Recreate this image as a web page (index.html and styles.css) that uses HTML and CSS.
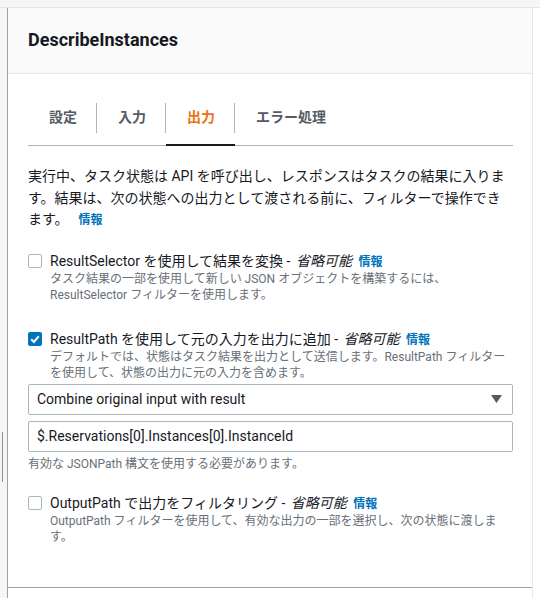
FILE: index.html
```html
<!DOCTYPE html>
<html lang="ja">
<head>
<meta charset="utf-8">
<title>DescribeInstances</title>
<link rel="stylesheet" href="styles.css">
</head>
<body>
<div class="topbar"></div>
<div class="main">
  <div class="gutter"><div class="handle"></div></div>
  <div class="panel">
    <div class="panel-header"><h2 class="title">DescribeInstances</h2></div>
    <div class="panel-body">
      <div class="tabs">
        <div class="tab">設定</div>
        <div class="tab">入力</div>
        <div class="tab active">出力</div>
        <div class="tab">エラー処理</div>
      </div>
      <p class="intro">実行中、タスク状態は API を呼び出し、レスポンスはタスクの結果に入ります。結果は、次の状態への出力として渡される前に、フィルターで操作できます。<a class="info info-gap">情報</a></p>

      <div class="option option-first">
        <span class="checkbox"></span>
        <div class="option-text">
          <div class="option-label">ResultSelector を使用して結果を変換 - <i>省略可能</i> <a class="info">情報</a></div>
          <div class="option-desc">タスク結果の一部を使用して新しい JSON オブジェクトを構築するには、 ResultSelector フィルターを使用します。</div>
        </div>
      </div>

      <div class="option option-second">
        <span class="checkbox checked"><svg viewBox="0 0 14 14" width="14" height="14"><rect x="0" y="0" width="14" height="14" rx="2" fill="#0073bb"/><path d="M3.2 7.2 L6 10 L10.8 4.2" fill="none" stroke="#fff" stroke-width="2"/></svg></span>
        <div class="option-text">
          <div class="option-label">ResultPath を使用して元の入力を出力に追加 - <i>省略可能</i> <a class="info">情報</a></div>
          <div class="option-desc">デフォルトでは、状態はタスク結果を出力として送信します。ResultPath フィルターを使用して、状態の出力に元の入力を含めます。</div>
        </div>
      </div>

      <div class="select">
        <span class="select-value">Combine original input with result</span>
        <svg class="caret" viewBox="0 0 11 8" width="11" height="8"><polygon points="0,0 11,0 5.5,8" fill="#545b64"/></svg>
      </div>
      <div class="input">$.Reservations[0].Instances[0].InstanceId</div>
      <div class="hint">有効な JSONPath 構文を使用する必要があります。</div>

      <div class="option option-third">
        <span class="checkbox"></span>
        <div class="option-text">
          <div class="option-label">OutputPath で出力をフィルタリング - <i>省略可能</i> <a class="info">情報</a></div>
          <div class="option-desc">OutputPath フィルターを使用して、有効な出力の一部を選択し、次の状態に渡します。</div>
        </div>
      </div>
    </div>
    <div class="panel-footer"></div>
  </div>
</div>
</body>
</html>
```

FILE: styles.css
```css
* { box-sizing: border-box; }

html, body {
  margin: 0;
  padding: 0;
  background: #ffffff;
  font-family: Roboto, "Noto Sans CJK JP", sans-serif;
  color: #16191f;
}

.topbar {
  height: 8px;
  background: #f6f6f6;
  border-bottom: 1px solid #e2e7e7;
}

.main {
  display: flex;
  min-height: 590px;
}

.gutter {
  width: 7px;
  flex: none;
  background: #f6f6f6;
  padding-top: 424px;
}

.handle {
  width: 1px;
  height: 50px;
  margin-left: 2px;
  background: #879596;
}

.panel {
  width: 526px;
  flex: none;
  border-left: 1px solid #98a5a7;
  border-right: 1px solid #e6e8e8;
}

.panel-header {
  background: #fafafa;
  border-bottom: 1px solid #e6e8e8;
  height: 66px;
  padding: 20px 20px 0;
}

.title {
  margin: 0;
  font-size: 18px;
  line-height: 24px;
  font-weight: 700;
  color: #16191f;
}

.panel-body {
  padding: 21px 19px 42px 20px;
}

.tabs {
  display: flex;
  border-bottom: 1px solid #aab7b8;
}

.tab {
  position: relative;
  padding: 11px 20px 17px 21px;
  font-size: 14px;
  line-height: 22px;
  font-weight: 700;
  color: #545b64;
}

.tab + .tab::before {
  content: "";
  position: absolute;
  left: -1px;
  top: 8px;
  width: 1px;
  height: 30px;
  background: #aab7b8;
}

.tab.active {
  color: #ec7211;
}

.tab.active::after {
  content: "";
  position: absolute;
  left: 0;
  right: 0;
  bottom: -1px;
  height: 2px;
  background: #16191f;
}

.intro {
  margin: 20px 0 0;
  font-size: 14px;
  line-height: 21.5px;
  color: #16191f;
}

.info {
  font-size: 12px;
  line-height: 1;
  font-weight: 700;
  color: #0073bb;
  cursor: pointer;
  margin-left: 3px;
}

.info-gap {
  margin-left: 10px;
}

.option-label i {
  font-style: italic;
  line-height: 1;
  margin-left: 2px;
}

.option {
  display: flex;
  gap: 8px;
}

.option-first { margin-top: 20px; }
.option-second { margin-top: 26px; }
.option-third { margin-top: 21px; }

.checkbox {
  flex: none;
  width: 14px;
  height: 14px;
  margin-top: 3px;
  border: 1px solid #aab7b8;
  border-radius: 2px;
  background: #fff;
}

.checkbox.checked {
  border: none;
}

.checkbox svg { display: block; }

.option-text {
  flex: 1;
  min-width: 0;
}

.option-label {
  font-size: 14px;
  line-height: 20px;
  height: 20px;
  white-space: nowrap;
  color: #16191f;
}

.option-desc {
  font-size: 12px;
  line-height: 16px;
  color: #687078;
}

.select {
  margin-top: 3px;
  height: 31px;
  border: 1px solid #aab7b8;
  border-radius: 2px;
  display: flex;
  align-items: center;
  justify-content: space-between;
  padding: 0 10px 0 8px;
  font-size: 14px;
  color: #16191f;
}

.caret { display: block; }

.input {
  margin-top: 6px;
  height: 31px;
  border: 1px solid #aab7b8;
  border-radius: 2px;
  display: flex;
  align-items: center;
  padding: 0 8px;
  font-size: 14px;
  color: #16191f;
}

.hint {
  margin-top: 4px;
  font-size: 12px;
  line-height: 16px;
  color: #687078;
}

.panel-footer {
  border-top: 1px solid #98a5a7;
  height: 12px;
}
```
